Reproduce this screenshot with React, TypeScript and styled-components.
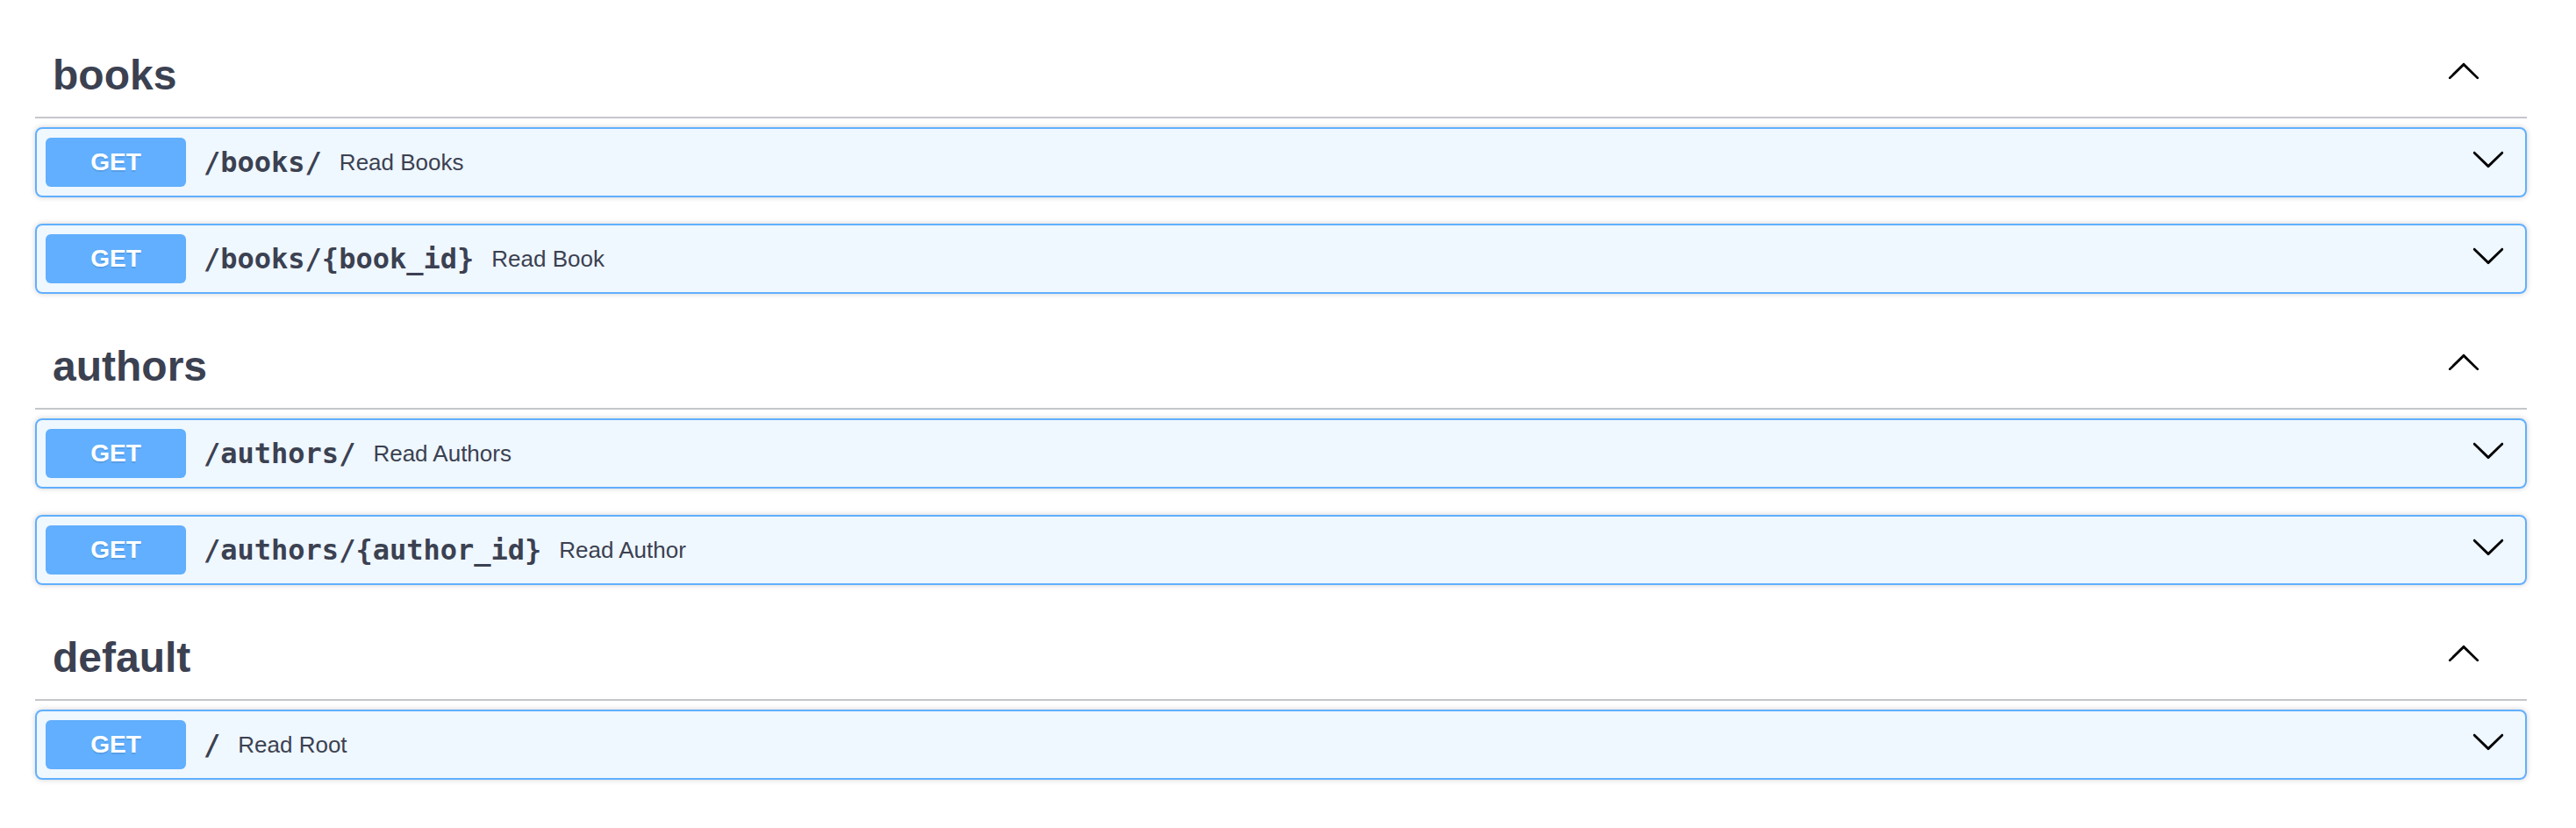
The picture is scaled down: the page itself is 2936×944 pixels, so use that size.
import React from "react";
import styled, { createGlobalStyle } from "styled-components";

const GlobalStyle = createGlobalStyle`
  html, body {
    margin: 0;
    padding: 0;
    background: #ffffff;
  }
  body {
    font-family: "Liberation Sans", Arial, sans-serif;
    color: #3b4151;
  }
  * {
    box-sizing: border-box;
  }
`;

const Wrapper = styled.div`
  width: 100%;
  padding: 38px 56px 0 40px;
`;

const Section = styled.section`
  display: flex;
  flex-direction: column;
`;

const TagHeader = styled.h3`
  display: flex;
  align-items: center;
  margin: 0 0 10px;
  padding: 20px 40px 20px 20px;
  border-bottom: 2px solid rgba(59, 65, 81, 0.3);
  font-family: "Liberation Sans", Arial, sans-serif;
  font-size: 48px;
  font-weight: 700;
  line-height: normal;
  color: #3b4151;
`;

const TagTitle = styled.span`
  white-space: nowrap;
`;

const TagSpacer = styled.small`
  flex: 2;
`;

const ToggleButton = styled.button`
  display: flex;
  align-items: center;
  justify-content: center;
  width: 40px;
  height: 40px;
  margin: 0 12px 12px 0;
  padding: 0;
  border: none;
  background: none;
  cursor: pointer;
`;

const OpList = styled.div`
  display: flex;
  flex-direction: column;
  gap: 30px;
  padding-bottom: 35px;
`;

const OpBlock = styled.div`
  display: flex;
  align-items: center;
  padding: 10px;
  border: 2px solid #61affe;
  border-radius: 8px;
  background: rgba(97, 175, 254, 0.1);
  box-shadow: 0 0 6px rgba(0, 0, 0, 0.19);
  cursor: pointer;
`;

const Method = styled.span`
  min-width: 160px;
  padding: 12px 0;
  text-align: center;
  border-radius: 6px;
  background: #61affe;
  color: #ffffff;
  font-family: "Liberation Sans", Arial, sans-serif;
  font-size: 28px;
  font-weight: 700;
  line-height: normal;
  text-shadow: 0 2px 0 rgba(0, 0, 0, 0.1);
`;

const Path = styled.span`
  padding: 0 20px;
  font-family: "DejaVu Sans Mono", "Liberation Mono", monospace;
  font-size: 32px;
  font-weight: 700;
  line-height: normal;
  color: #3b4151;
  white-space: nowrap;
`;

const Description = styled.span`
  flex: 1 1 auto;
  font-family: "Liberation Sans", Arial, sans-serif;
  font-size: 26px;
  line-height: normal;
  color: #3b4151;
`;

const ArrowButton = styled.button`
  display: flex;
  align-items: center;
  justify-content: center;
  width: 40px;
  height: 40px;
  margin: 0 12px 8px 0;
  padding: 0;
  border: none;
  background: none;
  cursor: pointer;
`;

const ArrowUp = () => (
  <svg width="40" height="40" viewBox="0 0 20 20" aria-hidden="true">
    <path
      fill="#000"
      d="M17.418 14.908c.272.268.709.268.979 0s.271-.701 0-.969l-7.908-7.83c-.27-.268-.707-.268-.979 0l-7.908 7.83c-.27.268-.27.701 0 .969.271.268.709.268.979 0L10 7.75l7.418 7.158z"
    />
  </svg>
);

const ArrowDown = () => (
  <svg width="40" height="40" viewBox="0 0 20 20" aria-hidden="true">
    <path
      fill="#000"
      d="M17.418 6.109c.272-.268.709-.268.979 0s.271.701 0 .969l-7.908 7.83c-.27.268-.707.268-.979 0l-7.908-7.83c-.27-.268-.27-.701 0-.969.271-.268.709-.268.979 0L10 13.25l7.418-7.141z"
    />
  </svg>
);

type Op = { method: string; path: string; summary: string };
type Tag = { name: string; ops: Op[] };

const tags: Tag[] = [
  {
    name: "books",
    ops: [
      { method: "GET", path: "/books/", summary: "Read Books" },
      { method: "GET", path: "/books/{book_id}", summary: "Read Book" },
    ],
  },
  {
    name: "authors",
    ops: [
      { method: "GET", path: "/authors/", summary: "Read Authors" },
      { method: "GET", path: "/authors/{author_id}", summary: "Read Author" },
    ],
  },
  {
    name: "default",
    ops: [{ method: "GET", path: "/", summary: "Read Root" }],
  },
];

export default function App() {
  return (
    <>
      <GlobalStyle />
      <Wrapper>
        {tags.map((tag) => (
          <Section key={tag.name}>
            <TagHeader>
              <TagTitle>{tag.name}</TagTitle>
              <TagSpacer />
              <ToggleButton aria-label="Collapse operation">
                <ArrowUp />
              </ToggleButton>
            </TagHeader>
            <OpList>
              {tag.ops.map((op) => (
                <OpBlock key={op.path}>
                  <Method>{op.method}</Method>
                  <Path>{op.path}</Path>
                  <Description>{op.summary}</Description>
                  <ArrowButton aria-label="Expand operation">
                    <ArrowDown />
                  </ArrowButton>
                </OpBlock>
              ))}
            </OpList>
          </Section>
        ))}
      </Wrapper>
    </>
  );
}
